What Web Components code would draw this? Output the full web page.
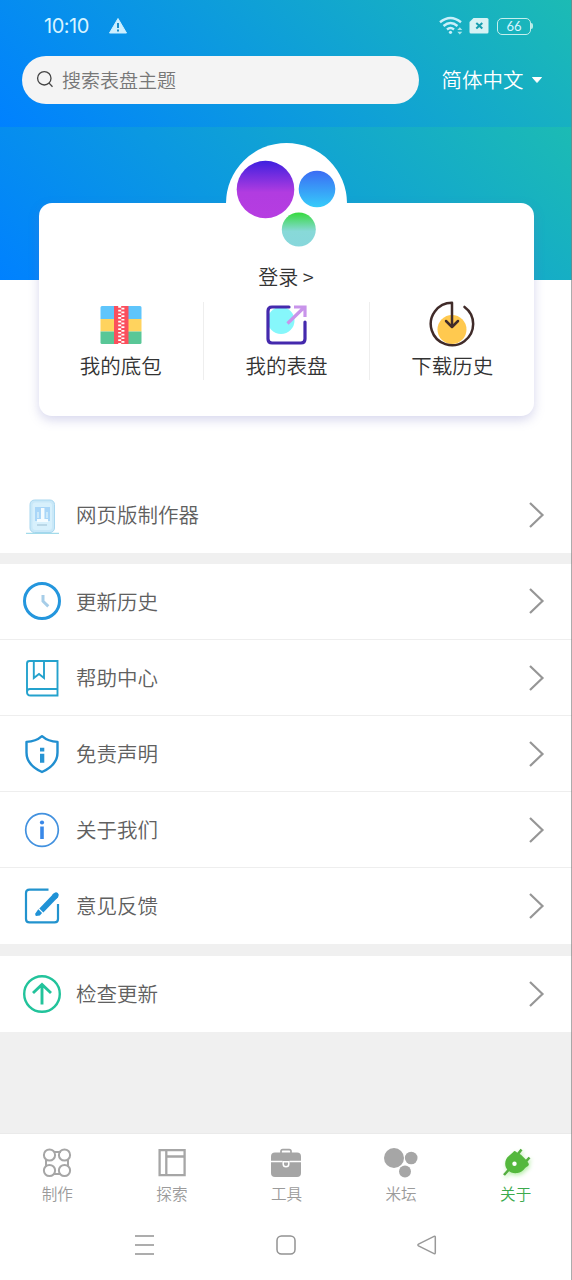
<!DOCTYPE html>
<html lang="zh-CN">
<head>
<meta charset="utf-8">
<title>关于</title>
<style>
html,body{margin:0;padding:0}
body{width:572px;height:1280px;overflow:hidden;font-family:"Noto Sans CJK SC",sans-serif;font-weight:350;background:#fff}
</style>
</head>
<body>
<about-page></about-page>
<script>
const ICONS = {
  bag: `<svg width="42" height="40" viewBox="0 -2 42 40"><path fill="#5fc5fb" d="M2 0h38a1.500 1.500 0 0 1 1.500 1.500V13H.5V1.500A1.500 1.500 0 0 1 2 0z"/><path fill="#ffd35e" d="M.5 13h41v12.500H.5z"/><path fill="#59c797" d="M.5 25.500h41V36.500a1.500 1.500 0 0 1-1.500 1.500H2a1.500 1.500 0 0 1-1.500-1.500z"/><path fill="#fb4f5d" d="M14 0h14.500v38H14z"/><path d="M19.700 0v38M22.900 1.800V38" stroke="#fff" stroke-width="3" stroke-dasharray="1.700 2"/></svg>`,
  share: `<svg width="42" height="42" viewBox="0 -2 42 42"><circle cx="15" cy="15.500" r="13.500" fill="#86f7fb"/><path d="M23 2H6Q2 2 2 6v28q0 4 4 4h29q4 0 4-4V17" fill="none" stroke="#4429ad" stroke-width="3.200" stroke-linecap="round"/><path d="M21.500 18.500L38 2.500M28 2h11v10" fill="none" stroke="#c894ea" stroke-width="3.200"/></svg>`,
  download: `<svg width="46" height="46" viewBox="0 0 46 46"><circle cx="23" cy="28.500" r="14.500" fill="#ffc94f"/><path d="M23 25.500V1.800A21.200 21.200 0 1 0 35.500 5.900" fill="none" stroke="#402b29" stroke-width="2.500" stroke-linecap="round" stroke-linejoin="round"/><path d="M17 20l6 6 6-6" fill="none" stroke="#402b29" stroke-width="2.500" stroke-linecap="round" stroke-linejoin="round"/></svg>`,
  maker: `<svg width="38" height="38" viewBox="0 0 38 38"><rect x="7" y="2" width="24.500" height="32.500" rx="4.500" fill="#c9e8f8" stroke="#a9d7ef"/><rect x="9.500" y="4.500" width="19.500" height="27.500" rx="3" fill="#d7f0fc"/><path fill="#a9d6f8" d="M12 9h15v14H12z"/><path d="M19.700 10v13" stroke="#f5fcff" stroke-width="3.500"/><path d="M15 14v6m9-6v6" stroke="#cce9fa" stroke-width="2"/><path d="M14 22.500h11" stroke="#f5fcff" stroke-width="3"/><path d="M14 27h10" stroke="#afcfe0" stroke-width="1.500"/><path d="M3 35.300h33" stroke="#8cd2e5"/></svg>`,
  clock: `<svg width="38" height="38" viewBox="0 0 38 38"><circle cx="19" cy="19" r="17.500" fill="none" stroke="#2496dd" stroke-width="3"/><path d="M20 13v6.200l5.300 5.200" fill="none" stroke="#a6cde8" stroke-width="3"/></svg>`,
  book: `<svg width="38" height="38" viewBox="0 0 38 38" fill="none" stroke="#24a2cd" stroke-width="1.900"><path d="M34.500 30V2H6.500Q4 2 4 4.500V33q0 3.500 3.500 3.500h27V30H7q-3 0-3 3M10.800 2v17l5.200-4 5 4V2"/></svg>`,
  shield: `<svg width="38" height="40" viewBox="0 0 38 40"><path d="M19 2.200c4 3.500 9 5.500 15.500 5.700v10.600c0 8.500-5.500 15-15.500 19.500C9 33.500 3.500 27 3.500 18.500V7.900C10 7.700 15 5.700 19 2.200z" fill="none" stroke="#208fd0" stroke-width="2.400" stroke-linejoin="round"/><path fill="#2694d3" d="M17 13.800h4.300v3.700H17zm0 6h4.300v9H17z"/></svg>`,
  info: `<svg width="38" height="38" viewBox="0 0 38 38"><circle cx="19" cy="19" r="16.300" fill="none" stroke="#4291df" stroke-width="1.700"/><circle cx="19" cy="11.500" r="2.100" fill="#3988e8"/><path d="M19 15.500V28" stroke="#3988e8" stroke-width="3.600"/></svg>`,
  edit: `<svg width="38" height="38" viewBox="0 0 38 38"><path d="M25.500 2.600H6.500q-3.500 0-3.500 3.500v25.800q0 3.500 3.500 3.500h25q3.500 0 3.500-3.500V17" fill="none" stroke="#2293ce" stroke-width="2.200"/><path d="M18.300 23.500L33 8.300" stroke="#2092d6" stroke-width="5.600"/><path d="M31 6.300q2-1.800 3.800-.2t.4 3.800L33 12l-4-4z" fill="#2092d6"/><path d="M15.300 22.300l3.800 3.800-2.200 2.300-3.800.6q-1.500-.5-.6-2.700z" fill="#2092d6"/></svg>`,
  update: `<svg width="38" height="38" viewBox="0 0 38 38" fill="none" stroke="#22c39b"><circle cx="19" cy="19" r="17.800" stroke-width="2.400"/><path d="M19 29.500V10M10 18l9-8.500 9 8.500" stroke-width="2.900"/></svg>`,
  make: `<svg width="30" height="30" viewBox="0 0 30 30" fill="none" stroke="#a6a6a6" stroke-width="2"><path d="M12 4h7M12 26h7M4 12v7M26 12v7"/><circle cx="7.500" cy="7" r="5.600"/><circle cx="22.500" cy="7" r="5.600"/><circle cx="7.500" cy="22.500" r="5.600"/><circle cx="22.500" cy="22.500" r="5.600"/></svg>`,
  explore: `<svg width="30" height="30" viewBox="0 0 30 30" fill="none" stroke="#a6a6a6" stroke-width="2.300"><path d="M2.600 2.100h25v25h-25zM9.300 2.100v25M9.300 8.500h18.300"/></svg>`,
  tools: `<svg width="30" height="30" viewBox="0 0 30 30"><path d="M10 6V3.300q0-1.700 1.700-1.700h6.600q1.700 0 1.700 1.700V6" fill="none" stroke="#a5a5a5" stroke-width="1.700"/><rect y="4.500" width="30" height="24.500" rx="4" fill="#a5a5a5"/><path d="M0 13.500h11.500M18.500 13.500H30" stroke="#fff" stroke-width="1.500"/><path d="M12.200 13.700v2.200a2.800 2.800 0 0 0 5.600 0v-2.200z" fill="#a5a5a5" stroke="#fff" stroke-width="1.500"/></svg>`,
  forum: `<svg width="34" height="30" viewBox="0 0 34 30" fill="#a6a6a6"><circle cx="10" cy="10" r="10"/><circle cx="27.200" cy="10" r="6.300"/><circle cx="21" cy="23.500" r="6"/></svg>`,
  plug: `<svg style="filter:drop-shadow(1px 2px 2px #b6eda9)" width="32" height="30" viewBox="0 0 32 30"><path d="M4 27L9 21.500M18 6l3.500-4.500M25.500 14l4-4.500" stroke="#54ae3f" stroke-width="2.600"/><path d="M14 3.200Q15 2.200 17 4.500l4 2.200 5 5 2.500 3.500q1 1.500-.5 2.800c-3.500 1.500-4.500 6-10.500 7C10.500 26 5 21.500 5.200 15.500 5.400 8.500 11 7 14 3.200z" fill="#54b83d"/><circle cx="14.500" cy="15.700" r="2.200" fill="#fff"/></svg>`
};

function define(name, markup) {
  const template = document.createElement('template');
  template.innerHTML = markup;
  customElements.define(name, class extends HTMLElement {
    constructor() {
      super();
      this.attachShadow({mode: 'open'}).append(template.content.cloneNode(true));
    }
    connectedCallback() {
      const holder = this.shadowRoot.querySelector('[data-icon]');
      if (holder) holder.innerHTML = ICONS[this.getAttribute('icon')];
    }
  });
}

define('status-bar', `<style>
:host{display:flex;height:52px;padding:0 39px 0 44px;box-sizing:border-box;align-items:center;color:#d8f4ff;font:20px/52px Inter,sans-serif}
.time{width:64px;letter-spacing:-.5px;white-space:nowrap}.space{flex:1}svg{display:block;flex:none}
.battery{box-sizing:border-box;width:34px;height:17px;border:1.500px solid #c5efed;border-radius:5px;font:13px/14px Lato,sans-serif;text-align:center;margin-left:8px}
.tip{width:2px;height:6px;background:#b8eae5;border-radius:0 2px 2px 0}
</style><span class="time">10:10</span>
<svg width="20" height="18" viewBox="0 0 20 18"><path d="M10 1.500L18.500 16h-17z" fill="#ccefff" stroke="#ccefff" stroke-linejoin="round"/><path d="M10 6v5m0 1.500v2" stroke="#188bca" stroke-width="2"/></svg><span class="space"></span>
<svg width="24" height="20" viewBox="0 0 24 20" fill="none" stroke="#c9effa" stroke-width="2.400"><path d="M1 6.200q10.500-8.500 21 0M4.500 10q7-6 14 0M8 13.500q3.500-3 7 0"/><circle cx="11.500" cy="16.300" r="1.600" fill="#c9effa" stroke="none"/><path d="M18.300 14l2.500-2.700 2.500 2.700zM18.300 15.700l2.500 2.700 2.500-2.700z" fill="#a9e6ea" stroke="none"/></svg>
<svg style="margin:-2px 0 0 6px" width="20" height="17" viewBox="0 0 20 17"><path d="M4.500 1H18q1.500 0 1.500 1.500V15q0 1.500-1.500 1.500H2Q.5 16.500.5 15V5z" fill="#d6f2f4"/><path d="M7.300 6l6 5.500m0-5.500l-6 5.500" stroke="#159dae" stroke-width="2"/></svg>
<span class="battery">66</span><span class="tip"></span>`);

define('search-bar', `<style>
:host{display:flex;height:55px;margin:0 0 0 22px;align-items:center;color:#fff;font-size:20.500px}
.field{display:flex;align-items:center;width:397px;height:48px;box-sizing:border-box;border-radius:24px;background:#f4f4f4;color:#777;padding-left:14px;font-size:19px}
.field span{margin-top:-1px}
svg{flex:none}.field svg{margin-right:7px}.lang{margin:-1px 0 0 22.500px;white-space:nowrap}.arrow{margin-left:7px}
</style><div class="field"><svg width="19" height="19" viewBox="0 0 19 19" fill="none" stroke="#444" stroke-width="1.300"><circle cx="8.300" cy="8.300" r="6.700"/><path d="M13.100 13.100l3.400 3.600"/></svg><span><slot></slot></span></div><span class="lang"><slot name="language"></slot></span><svg class="arrow" width="12" height="8" viewBox="0 0 12 8"><path d="M1.500 1.500h9L6 6.500z" fill="#fff" stroke="#fff" stroke-linejoin="round"/></svg>`);

define('quick-link', `<style>
:host{display:flex;flex-direction:column;align-items:center;flex:1;height:78px;font-size:20.500px;line-height:30px;color:#333;box-sizing:border-box}
:host(:not(:last-child)){border-right:1px solid #eee}.icon{flex:none;height:44px;display:flex;align-items:center}.icon svg{display:block}span{flex:none;margin-top:4px;white-space:nowrap}
</style><div class="icon" data-icon></div><span><slot></slot></span>`);

define('profile-card', `<style>
:host{display:block;position:relative;width:495px;height:213px;box-sizing:border-box;padding-top:59px;background:#fff;border-radius:13px;box-shadow:0 4px 11px #7070c048}
.avatar{position:absolute;left:187px;top:-60.500px}.login{position:relative;font-size:20px;line-height:30px;text-align:center;color:#333}.links{display:flex;margin:10px -1px 0 0}
</style><svg class="avatar" width="121" height="121" viewBox="0 0 121 121"><defs><linearGradient id="p" x2="0" y2="1"><stop stop-color="#3e20df"/><stop offset=".55" stop-color="#b13ce0"/><stop offset="1" stop-color="#b63de1"/></linearGradient><linearGradient id="b" x2="0" y2="1"><stop stop-color="#3b6cf4"/><stop offset="1" stop-color="#36ccfa"/></linearGradient><linearGradient id="g" x2="0" y2="1"><stop stop-color="#36da3d"/><stop offset=".55" stop-color="#88d9d8"/><stop offset="1" stop-color="#87d7dc"/></linearGradient></defs><circle cx="60.500" cy="60.500" r="60.500" fill="#fff"/><circle cx="39.500" cy="46.500" r="28.800" fill="url(#p)"/><circle cx="91" cy="46" r="18.300" fill="url(#b)"/><circle cx="72.800" cy="86.500" r="17" fill="url(#g)"/></svg><div class="login"><slot name="login"></slot></div><div class="links"><slot></slot></div>`);

define('menu-row', `<style>
:host{display:flex;height:76px;box-sizing:border-box;align-items:center;padding:0 27px 0 23px;background:#fff;border-bottom:1px solid #eee;color:#606060;font-size:20.500px}
:host([last]){border-bottom-color:#fff}.icon{width:38px;margin-right:15px}.icon svg{display:block}.label{flex:1;margin-top:-2px}
:host([icon="maker"]) .icon{margin-top:3px}:host([icon="clock"]) .icon,:host([icon="clock"]) svg{margin-top:-1px}
</style><div class="icon" data-icon></div><span class="label"><slot></slot></span><svg width="17" height="28" viewBox="0 0 17 28" fill="none" stroke="#969696" stroke-width="2.200"><path d="M2 2l12.500 12L2 26"/></svg>`);

define('menu-group', `<style>:host{display:block;margin-bottom:var(--gap,0)}</style><slot></slot>`);

define('tab-item', `<style>
:host{display:flex;flex:1;flex-direction:column;align-items:center;color:#9b9b9b;font-size:15.600px;line-height:24px}
:host([active]){color:#3caa4d}.icon{height:30px}.icon svg{display:block}span{margin-top:3px}
</style><div class="icon" data-icon></div><span><slot></slot></span>`);

define('tab-bar', `<style>:host{display:flex;box-sizing:border-box;height:77px;padding:14px 0 0;margin-right:-1px;background:#fff;border-top:1px solid #eaeaea}</style><slot></slot>`);

define('system-nav', `<style>
:host{display:flex;height:70px;justify-content:space-between;align-items:center;padding:0 134px;background:#fff}svg{display:block}
</style><svg width="22" height="22" viewBox="0 0 22 22" stroke="#929292" stroke-width="1.500"><path d="M1 2h19M1 11h19M1 20h19"/></svg><svg width="22" height="22" viewBox="0 0 22 22" fill="none" stroke="#929292" stroke-width="1.500"><rect x="2" y="2" width="18" height="18" rx="4.500"/></svg><svg width="22" height="22" viewBox="0 0 22 22" fill="none" stroke="#999" stroke-width="1.500"><path d="M2.500 10.200L18 2.400q1.300-.4 1.300 1v15.200q0 1.400-1.300 1L2.500 11.800q-1.200-.8 0-1.600z"/></svg>`);

define('about-page', `<style>
:host{display:block;position:relative;width:572px;height:1280px;background:#f0f0f0;overflow:hidden}
.head,.banner{background:linear-gradient(45deg,#0081ff,#1cbbb4)}.head{height:127px}.banner{height:153px}
.profile{height:351px;background:#fff}.profile .banner{display:flex;justify-content:center;padding-top:76px;height:77px}
.fill{height:101px}.edge{position:absolute;right:0;top:0;width:1px;height:1280px;background:#808080;opacity:.65}
</style><div class="head"><status-bar></status-bar><search-bar>搜索表盘主题<span slot="language">简体中文</span></search-bar></div>
<div class="profile"><div class="banner"><profile-card><span slot="login">登录 &gt;</span><quick-link icon="bag">我的底包</quick-link><quick-link icon="share">我的表盘</quick-link><quick-link icon="download">下载历史</quick-link></profile-card></div></div>
<menu-group style="--gap:11px"><menu-row icon="maker" last style="height:75px">网页版制作器</menu-row></menu-group>
<menu-group style="--gap:12px"><menu-row icon="clock">更新历史</menu-row><menu-row icon="book">帮助中心</menu-row><menu-row icon="shield">免责声明</menu-row><menu-row icon="info">关于我们</menu-row><menu-row icon="edit" last>意见反馈</menu-row></menu-group>
<menu-group><menu-row icon="update" last>检查更新</menu-row></menu-group><div class="fill"></div>
<tab-bar><tab-item icon="make">制作</tab-item><tab-item icon="explore">探索</tab-item><tab-item icon="tools">工具</tab-item><tab-item icon="forum">米坛</tab-item><tab-item icon="plug" active>关于</tab-item></tab-bar><system-nav></system-nav><div class="edge"></div>`);
</script>
</body>
</html>
